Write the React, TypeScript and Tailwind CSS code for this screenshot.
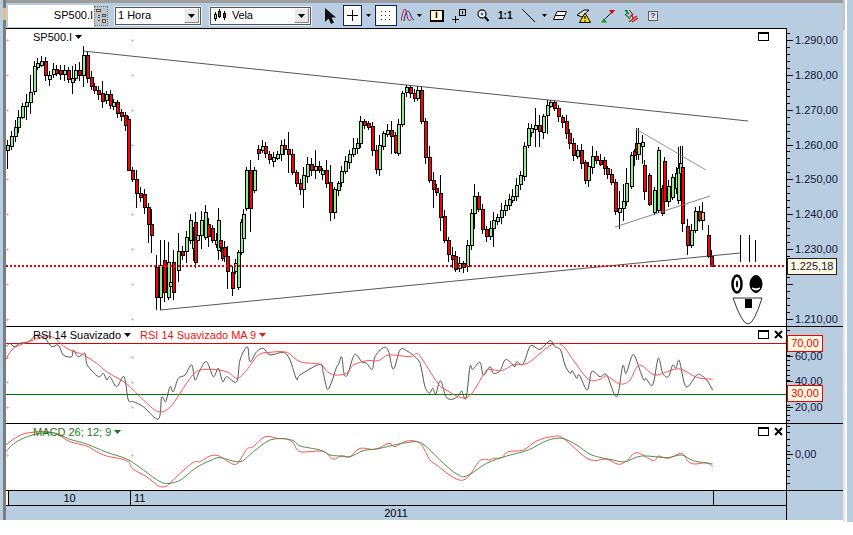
import React from "react";

type Pt = [number, number];

// main chart price trace in page coordinates
const priceTrace: Pt[] = [
  [7, 150], [12, 135], [20, 115], [25, 105], [30, 90], [35, 62], [40, 55], [45, 72], [55, 70], [65, 75], [70, 78],
  [80, 68], [83, 60], [88, 78], [92, 85], [100, 95], [105, 97], [112, 105], [120, 115], [125, 120], [128.5, 170],
  [131, 180], [140, 195], [148, 225], [155, 260], [158, 298], [165, 295], [172, 265], [180, 255], [190, 240],
  [200, 220], [205, 215], [215, 245], [225, 265], [232, 280], [238, 250], [245, 200], [250, 160], [258, 150],
  [268, 155], [285, 145], [292, 170], [298, 195], [305, 165], [315, 172], [325, 175], [330, 215], [335, 185],
  [345, 165], [352, 150], [360, 125], [370, 130], [375, 165], [382, 130], [390, 135], [395, 150], [402, 90],
  [410, 95], [418, 95], [422, 130], [428, 180], [435, 190], [442, 230], [450, 265], [458, 260], [465, 265],
  [470, 205], [478, 205], [485, 245], [495, 220], [502, 210], [512, 195], [520, 170], [527, 135], [532, 125],
  [540, 130], [547, 105], [556, 110], [565, 125], [570, 150], [578, 155], [585, 185], [590, 160], [600, 165],
  [610, 175], [617, 220], [625, 190], [632, 150], [637, 140], [642, 145], [648, 195], [655, 205], [660, 150],
  [665, 200], [672, 180], [680, 165], [683.5, 225], [688, 245], [695, 215], [702, 215], [708, 240], [712, 265],
];

const tallWicks: Record<number, [number, number]> = {
  39: [30, 80],
  637: [128, 160],
  703: [202, 230],
};

type Bar = { x: number; top: number; h: number; wt: number; wb: number; up: boolean };

const bar = (x: number, top: number, h: number, up: boolean, wt = top - 3, wb = top + h + 3): Bar => ({ x, top, h, wt, wb, up });

// candles placed by hand: the long bars of the reference
const fixedBars: Bar[] = [
  bar(128, 119, 51, false, 116, 170),
  bar(156, 267, 30, false, 255, 310),
  bar(160, 265, 32, true, 240, 310),
  bar(164, 260, 32, false, 240, 302),
  bar(168, 262, 35, true, 242, 300),
  bar(173, 262, 30, false, 250, 300),
  bar(190, 220, 20, true, 214, 244),
  bar(195, 222, 40, false, 212, 268),
  bar(205, 212, 25, true, 205, 240),
  bar(212, 228, 12, false),
  bar(218, 220, 30, true, 208, 260),
  bar(222, 248, 10, false),
  bar(232, 272, 16, false, 266, 296),
  bar(238, 252, 35, true, 250, 290),
  bar(241, 222, 30, true),
  bar(246, 170, 38, true),
  bar(250, 170, 38, false, 160, 232),
  bar(254, 170, 20, true),
  bar(631, 155, 31, true),
  bar(636, 143, 9, false, 128, 160),
  bar(644, 165, 26, false, 160, 200),
  bar(654, 190, 22, true),
  bar(658, 150, 60, true),
  bar(662, 188, 25, false),
  bar(672, 177, 20, true),
  bar(678, 168, 32, true, 147, 204),
  bar(682, 167, 56, false, 146, 232),
  bar(708, 235, 21, false, 225, 258),
  bar(711, 256, 10, false, 250, 266),
];

const upperLine = (x: number) => 51 + ((x - 83) * 70) / 665;
const lowerLine = (x: number) => 310 - ((x - 160) * 57) / 580;

function priceAt(x: number) {
  for (let i = 1; i < priceTrace.length; i++) {
    const [x0, y0] = priceTrace[i - 1];
    const [x1, y1] = priceTrace[i];
    if (x <= x1) return y0 + ((y1 - y0) * (x - x0)) / (x1 - x0);
  }
  return priceTrace[priceTrace.length - 1][1];
}

// choppy stretches of the chart get larger candles
function chop(x: number) {
  if (x > 150 && x < 240) return 2;
  if (x > 245 && x < 262) return 1.5;
  if (x > 355 && x < 400) return 1.5;
  if (x > 440 && x < 500) return 1.7;
  if (x > 610 && x < 680) return 1.7;
  return 1;
}

function makeCandles() {
  let seed = 41;
  const rnd = () => {
    seed = (seed * 1103515245 + 12345) % 2147483648;
    return seed / 2147483648;
  };
  const out: Bar[] = [];
  let prev = priceAt(7);
  for (let cx = 7; cx <= 706; cx += 3.8) {
    const k = chop(cx);
    const close = priceAt(cx) + (rnd() - 0.5) * 11 * k;
    const up = close < prev;
    const top = Math.round(Math.min(prev, close));
    const h = Math.max(4, Math.round(Math.abs(close - prev)));
    const big = rnd() > 0.72;
    const x = Math.round(cx);
    const fix = Object.keys(tallWicks).map(Number).find((n) => Math.abs(n - x) < 2);
    const skip = fixedBars.some((b) => Math.abs(b.x - x) < 2);
    if (!skip) {
      let wt = top - 2 - rnd() * (big ? 16 : 5);
      let wb = top + h + 2 + rnd() * (big ? 18 : 5);
      // highs and lows stop at the drawn trend lines
      if (x > 83) wt = Math.max(wt, upperLine(x));
      if (x > 160) wb = Math.min(wb, lowerLine(x));
      out.push({
        x,
        top,
        h,
        wt: fix ? tallWicks[fix][0] : wt,
        wb: fix ? tallWicks[fix][1] : wb,
        up,
      });
    }
    prev = close;
  }
  return [...out, ...fixedBars].sort((a, b) => a.x - b.x);
}

const candles = makeCandles();

const fromLeft = (base: number, pts: Pt[]): Pt[] => pts.map(([x, y]) => [x / 3, base + y / 3]);
const fromMid = (base: number, pts: Pt[]): Pt[] => pts.map(([x, y]) => [320 + x / 3, base + y / 3]);

// catmull-rom through the traced points, the lines of the reference are smoothed
function smooth(pts: Pt[]) {
  let d = `M${pts[0][0].toFixed(1)} ${pts[0][1].toFixed(1)}`;
  for (let i = 0; i < pts.length - 1; i++) {
    const p0 = pts[Math.max(i - 1, 0)];
    const p1 = pts[i];
    const p2 = pts[i + 1];
    const p3 = pts[Math.min(i + 2, pts.length - 1)];
    const c1x = p1[0] + (p2[0] - p0[0]) / 6;
    const c1y = p1[1] + (p2[1] - p0[1]) / 6;
    const c2x = p2[0] - (p3[0] - p1[0]) / 6;
    const c2y = p2[1] - (p3[1] - p1[1]) / 6;
    d += `C${c1x.toFixed(1)} ${c1y.toFixed(1)} ${c2x.toFixed(1)} ${c2y.toFixed(1)} ${p2[0].toFixed(1)} ${p2[1].toFixed(1)}`;
  }
  return d;
}

const rsiBlack = [
  ...fromLeft(320, [[18, 80], [30, 70], [42, 80], [60, 70], [85, 65], [110, 45], [135, 55], [155, 80], [175, 75], [190, 105], [215, 110], [220, 90], [235, 110], [255, 100], [262, 135], [295, 170], [310, 160], [320, 180], [330, 170], [350, 200], [372, 170], [385, 240], [400, 245], [430, 260], [475, 297], [485, 232], [497, 245], [510, 200], [520, 215], [535, 175], [555, 165], [575, 135], [585, 180], [600, 150], [620, 125], [640, 170], [655, 145], [668, 185], [680, 170], [710, 185], [720, 120], [742, 80], [750, 125], [770, 95], [790, 85], [810, 105], [850, 97], [870, 120], [890, 178], [900, 165]]),
  ...fromMid(330, [[0, 103], [10, 130], [22, 178], [35, 155], [50, 110], [55, 105], [65, 80], [72, 130], [82, 135], [100, 80], [110, 75], [125, 95], [140, 100], [157, 118], [165, 80], [190, 53], [205, 62], [220, 118], [240, 60], [260, 62], [295, 90], [305, 120], [315, 170], [328, 190], [338, 175], [347, 192], [358, 155], [365, 158], [378, 200], [395, 208], [415, 198], [425, 183], [438, 205], [450, 110], [458, 118], [480, 97], [490, 135], [510, 110], [520, 130], [540, 122], [555, 90], [570, 95], [585, 110], [590, 95], [605, 105], [615, 90], [632, 47], [660, 58], [690, 32], [705, 50], [722, 60], [735, 105], [750, 130], [757, 122], [770, 145], [778, 135], [802, 180], [815, 125], [840, 140], [860, 135], [890, 200], [908, 108], [918, 130], [935, 80], [945, 80], [970, 148], [978, 145], [998, 165], [1015, 85], [1028, 130], [1045, 140], [1058, 105], [1068, 115], [1078, 92], [1098, 170], [1130, 135], [1145, 137], [1160, 150], [1178, 180]]),
];

const rsiRed = [
  ...fromLeft(320, [[18, 118], [35, 90], [60, 75], [100, 60], [135, 48], [165, 55], [200, 85], [250, 105], [290, 130], [320, 155], [375, 188], [400, 210], [430, 240], [475, 275], [510, 262], [540, 220], [585, 158], [630, 148], [680, 155], [712, 175], [740, 150], [775, 105], [810, 97], [860, 97], [900, 125]]),
  ...fromMid(330, [[0, 103], [22, 125], [45, 135], [80, 130], [100, 105], [140, 92], [175, 92], [207, 75], [270, 80], [290, 70], [305, 85], [350, 155], [375, 178], [440, 203], [490, 135], [505, 118], [545, 122], [580, 105], [625, 98], [690, 47], [725, 45], [760, 90], [805, 148], [840, 148], [860, 138], [900, 162], [930, 150], [958, 105], [1005, 135], [1055, 120], [1085, 118], [1130, 142], [1178, 148]]),
];

const macdRed = [
  ...fromLeft(420, [[18, 75], [40, 58], [70, 42], [100, 37], [140, 35], [175, 45], [210, 65], [260, 78], [290, 95], [320, 108], [380, 122], [400, 148], [440, 170], [475, 197], [500, 198], [535, 165], [580, 127], [600, 125], [630, 108], [655, 107], [680, 122], [710, 132], [740, 88], [760, 80], [795, 50], [830, 55], [860, 57], [880, 70], [900, 95]]),
  ...fromMid(330, [[0, 363], [20, 370], [40, 388], [65, 377], [90, 380], [120, 355], [165, 358], [207, 340], [225, 350], [260, 333], [300, 340], [330, 390], [350, 405], [405, 445], [440, 445], [480, 392], [510, 390], [520, 385], [545, 383], [565, 365], [610, 360], [650, 333], [695, 320], [730, 325], [805, 387], [860, 388], [895, 403], [920, 393], [950, 368], [1000, 392], [1015, 378], [1045, 385], [1085, 370], [1105, 395], [1125, 402], [1160, 398], [1178, 410]]),
];

const macdGreen = [
  ...fromLeft(420, [[18, 95], [40, 72], [70, 55], [110, 42], [160, 38], [210, 58], [260, 72], [320, 97], [380, 117], [430, 150], [480, 185], [510, 190], [545, 178], [585, 145], [630, 122], [660, 113], [720, 125], [760, 95], [810, 60], [860, 57], [885, 65], [900, 78]]),
  ...fromMid(330, [[0, 360], [30, 375], [60, 378], [90, 380], [130, 362], [170, 357], [210, 348], [260, 338], [305, 340], [365, 395], [410, 432], [440, 438], [500, 400], [560, 378], [625, 360], [680, 332], [725, 325], [770, 345], [815, 375], [880, 390], [915, 395], [965, 378], [1040, 383], [1085, 375], [1120, 392], [1178, 402]]),
];

const Caret = ({ color = "#000" }: { color?: string }) => (
  <svg width="7" height="4" viewBox="0 0 7 4" className="ml-[3px] inline-block">
    <path d="M0 0h7L3.5 4z" fill={color} />
  </svg>
);

const GridMarks = ({ ys }: { ys: number[] }) => (
  <g stroke="#c8c8c8" strokeWidth="1" shapeRendering="crispEdges">
    {ys.map((y) => (
      <g key={y}>
        {[7, 132].map((x) => (
          <path key={x} d={`M${x - 1} ${y}h3M${x} ${y - 1}v3`} />
        ))}
      </g>
    ))}
  </g>
);

const PaneButtons = ({ close }: { close?: boolean }) => (
  <div className="absolute right-[3px] top-[3px] flex items-center gap-[5px]">
    <svg width="11" height="9" viewBox="0 0 11 9" shapeRendering="crispEdges">
      <path d="M.5 1.5h10v7H.5z" fill="none" stroke="#000" />
      <path d="M0 .5h11" stroke="#000" />
    </svg>
    {close ? (
      <svg width="9" height="9" viewBox="0 0 9 9">
        <path d="M1 1l7 7M8 1L1 8" stroke="#000" strokeWidth="2" />
      </svg>
    ) : (
      <span className="w-[9px]" />
    )}
  </div>
);

const Ticks = ({ y0, height, major, minor }: { y0: number; height: number; major: number[]; minor: number[] }) => (
  <svg width="10" height={height} viewBox={`0 ${y0} 10 ${height}`} shapeRendering="crispEdges" className="absolute left-0 top-0">
    {minor.map((y) => (
      <path key={y} d={`M0 ${y}h3`} stroke="#000" />
    ))}
    {major.map((y) => (
      <path key={y} d={`M0 ${y}h6`} stroke="#000" />
    ))}
  </svg>
);

const range = (from: number, to: number, step: number) => {
  const out: number[] = [];
  for (let v = from; v <= to; v += step) out.push(Math.round(v));
  return out;
};

const mainYs = range(40, 320, 34.86);

const MainChart = () => (
  <svg width="780" height="297" viewBox="6 29 780 297" className="block">
    <GridMarks ys={mainYs} />
    <g shapeRendering="crispEdges">
      {candles.map((c, i) => (
        <g key={i}>
          <path d={`M${c.x + 0.5} ${Math.round(c.wt)}V${Math.round(c.wb)}`} stroke="#000" strokeWidth="1" />
          <rect x={c.x - 1} y={c.top + 0.5} width="3" height={c.h} fill={c.up ? "#90ee90" : "#ff0000"} stroke="#000" strokeWidth="1" />
        </g>
      ))}
    </g>
    <g stroke="#444" strokeWidth="0.9" fill="none">
      <path d="M83 51L748 121" />
      <path d="M160 310L740 253" />
      <path d="M636 129L706 170" stroke="#888" />
      <path d="M615 227L710 196" stroke="#777" />
    </g>
    <path d="M6 266H786" stroke="#ee0000" strokeWidth="2" strokeDasharray="2 2" />
    {/* hand drawn face */}
    <g stroke="#000" fill="none">
      <path d="M740.5 235V262M749.5 235V262M755.5 240V262" strokeWidth="1" />
      <ellipse cx="737" cy="284" rx="4.5" ry="8.5" strokeWidth="2.5" />
      <ellipse cx="737" cy="284" rx="1" ry="3.5" fill="#000" strokeWidth="0" />
      <ellipse cx="756" cy="284" rx="6" ry="8.5" fill="#000" />
      <path d="M752 288q4 4 8 0q-4 2-8 0z" fill="#fff" stroke="#fff" strokeWidth="1" />
      <path d="M733 298H762Q754 324 748 324Q742 324 733 298Z" strokeWidth="0.8" />
      <rect x="745" y="299" width="7" height="9" fill="#000" stroke="none" />
    </g>
  </svg>
);

const RsiChart = () => (
  <svg width="780" height="96" viewBox="6 327 780 96" className="block">
    <GridMarks ys={[357, 382, 407]} />
    <path d="M6 343.5H786" stroke="#dd0000" shapeRendering="crispEdges" />
    <path d="M6 394.5H786" stroke="#008000" shapeRendering="crispEdges" />
    <path d={smooth(rsiBlack)} fill="none" stroke="#555" strokeWidth="1" />
    <path d={smooth(rsiRed)} fill="none" stroke="#ff5050" strokeWidth="1" />
  </svg>
);

const MacdChart = () => (
  <svg width="780" height="66" viewBox="6 424 780 66" className="block">
    <GridMarks ys={[455]} />
    <path d={smooth(macdRed)} fill="none" stroke="#ff5050" strokeWidth="1" />
    <path d={smooth(macdGreen)} fill="none" stroke="#4f8f4f" strokeWidth="1" />
  </svg>
);

const DropButton = () => (
  <div className="ml-auto mr-px flex h-[15px] w-[15px] items-center justify-center border border-[#888] border-l-white border-t-white bg-[#e8e8e8]">
    <svg width="7" height="4" viewBox="0 0 7 4">
      <path d="M0 0h7L3.5 4z" fill="#000" />
    </svg>
  </div>
);

const SmallArrow = ({ className }: { className: string }) => (
  <svg width="5" height="3" viewBox="0 0 5 3" className={className}>
    <path d="M0 0h5L2.5 3z" fill="#000" />
  </svg>
);

const CandleIcon = () => (
  <svg width="12" height="13" viewBox="0 0 12 13" shapeRendering="crispEdges">
    <path d="M1.5 3v9M5.5 0v9M10 2v9" stroke="#000" />
    <rect x="0.5" y="5.5" width="2" height="4" fill="#90ee90" stroke="#000" />
    <rect x="4.5" y="2.5" width="2" height="5" fill="#00a000" stroke="#000" />
    <rect x="9" y="4.5" width="2" height="4" fill="#f00" stroke="#000" />
  </svg>
);

const Toolbar = () => (
  <div className="flex h-[25px] shrink-0 items-center bg-[#b8cde0] text-[11px] text-black">
    <div className="ml-[2px] flex h-[22px] w-[86px] items-center justify-end bg-white pr-[1px]">SP500.I</div>
    <div className="flex h-[20px] w-[14px] items-center justify-center border border-dotted border-[#777] bg-[#c0c4c8]">
      <svg width="10" height="14" viewBox="0 0 10 14" shapeRendering="crispEdges" fill="none" stroke="#555">
        <path d="M.5 .5h4v2h-4zM6.5 5.5h3v2h-3zM6.5 10.5h3v3h-3zM1.5 6h2M1.5 8.5h2M1.5 11h2" />
      </svg>
    </div>
    <div className="ml-[6px] flex h-[20px] w-[88px] items-center border-2 border-[#e8eef4] bg-white pl-[2px] outline-1 -outline-offset-2 outline-[#555]">
      1 Hora
      <DropButton />
    </div>
    <div className="ml-[7px] flex h-[20px] w-[103px] items-center border-2 border-[#e8eef4] bg-white pl-[3px] outline-1 -outline-offset-2 outline-[#555]">
      <CandleIcon />
      <span className="ml-[6px] tracking-[-0.2px]">Vela</span>
      <DropButton />
    </div>
    {/* cursor */}
    <svg width="12" height="16" viewBox="0 0 12 16" className="ml-[12px]">
      <path d="M1 0v14l3.5-3.5L7 16l3-1.5L7.5 9.5H12z" fill="#111" />
    </svg>
    <div className="ml-[7px] flex h-[21px] w-[19px] items-center justify-center border-[1.5px] border-[#0a246a] bg-white">
      <svg width="11" height="11" viewBox="0 0 11 11" shapeRendering="crispEdges">
        <path d="M5.5 0v11M0 5.5h11" stroke="#000" />
      </svg>
    </div>
    <SmallArrow className="ml-[4px]" />
    <div className="ml-[4px] flex h-[21px] w-[22px] items-center justify-center border-[1.5px] border-[#0a246a] bg-white">
      <svg width="12" height="12" viewBox="0 0 12 12" shapeRendering="crispEdges">
        {[1, 5, 9].map((y) =>
          [1, 5, 9].map((x) => <rect key={`${x}-${y}`} x={x} y={y} width="1" height="1" fill="#333" />),
        )}
      </svg>
    </div>
    <svg width="13" height="13" viewBox="0 0 13 13" className="ml-[4px]" fill="none">
      <path d="M0 12C2 2 3 0 4 0s2 8 3 10 3 2 3 0" stroke="#c01818" />
      <path d="M3 12C4 6 5 2 7 2s3 8 6 9" stroke="#1c2a90" />
    </svg>
    <SmallArrow className="ml-[3px]" />
    <div className="ml-[8px] flex h-[12px] w-[14px] items-center justify-center border border-b-2 border-r-2 border-black bg-[#fff8d8] text-[10px] font-bold leading-none">
      i
    </div>
    <svg width="14" height="14" viewBox="0 0 14 14" className="ml-[8px]" shapeRendering="crispEdges" fill="none" stroke="#000">
      <path d="M0 10.5h7M3.5 7v7" />
      <path d="M7.5 .5h6v6h-6z" />
      <path d="M10.5 2v3" strokeWidth="1" />
    </svg>
    <svg width="12" height="13" viewBox="0 0 12 13" className="ml-[11px]" fill="none">
      <circle cx="5" cy="5" r="4" stroke="#222" strokeWidth="1.4" fill="#fff" />
      <path d="M8 8l3.5 4" stroke="#000" strokeWidth="2.2" />
      <path d="M3.5 5h3M5 3.5v3" stroke="#1030b0" />
    </svg>
    <span className="ml-[9px] w-[14px] text-[10px] font-bold leading-none">1:1</span>
    <svg width="13" height="13" viewBox="0 0 13 13" className="ml-[10px]" fill="none">
      <path d="M0 0l13 13" stroke="#000" />
    </svg>
    <SmallArrow className="ml-[7px]" />
    <svg width="14" height="9" viewBox="0 0 14 9" className="ml-[6px]" fill="#fff" stroke="#000">
      <path d="M4 .5h9.5L10 8.5H.5z" />
      <path d="M2.5 4.5H12" />
    </svg>
    <svg width="15" height="14" viewBox="0 0 15 14" className="ml-[9px]" stroke="#000">
      <path d="M1 6L8 1h5L6 8z" fill="#ddd" />
      <path d="M9 4L14.5 13.5H3.5z" fill="#ffe000" />
      <path d="M9 7v3M9 11v1.5" strokeWidth="1.2" />
    </svg>
    <svg width="14" height="14" viewBox="0 0 14 14" className="ml-[10px]" fill="none">
      <path d="M3 11L11 3" stroke="#000" />
      <path d="M8 1h6l-3 4z" fill="#e00000" />
      <path d="M0 13.5h6L3 9z" fill="#10a010" />
    </svg>
    <svg width="14" height="14" viewBox="0 0 14 14" className="ml-[9px]" fill="none">
      <path d="M1 1l4 4M3 1v4M1 5l5 5" stroke="#108030" strokeWidth="1.3" />
      <path d="M6 8l3-3M8 4l1 6M5 13l8-6M8 13l6-4" stroke="#d01818" strokeWidth="1.3" />
      <path d="M5 1l3 3" stroke="#333" />
    </svg>
    <div className="ml-[10px] flex h-[10px] w-[10px] items-center justify-center border border-[#666] bg-[#dde] text-[8px] font-bold leading-none text-[#333]">
      ?
    </div>
  </div>
);

const Badge = ({ children }: { children: React.ReactNode }) => (
  <div className="flex h-[17px] w-[36px] items-center justify-center border-[1.5px] border-[#ee0000] bg-[#fff8e0] text-[11px] leading-none text-[#ee0000]">
    {children}
  </div>
);

const AxisLabel = ({ children }: { children: React.ReactNode }) => (
  <div className="h-[14px] pl-[8px] text-[11px] leading-[14px] text-[#14143c]">{children}</div>
);

export default function App() {
  return (
    <div className="h-[535px] w-[853px] overflow-hidden bg-white font-['Liberation_Sans',sans-serif]">
      <div className="flex h-[523px]">
        {/* left window edge */}
        <div className="flex h-[520px] w-[6px]">
          <div className="w-[3px] bg-[#b8cde0]" />
          <div className="flex w-[3px] flex-col bg-[#7d7d7d]">
            <div className="h-[8px]" />
            <div className="h-[12px] bg-[#e8c070]" />
          </div>
        </div>

        <div className="flex h-[520px] w-[837px] flex-col">
          <div className="h-[3px] shrink-0 bg-[#9c9c9c]" />
          <Toolbar />

          <div className="flex h-[299px] shrink-0 border-b border-black">
            <div className="relative h-[298px] w-[781px] border-r border-t border-black bg-white">
              <MainChart />
              <div className="absolute left-[27px] top-[1px] flex items-center text-[11px] leading-[14px] text-black">
                SP500.I
                <Caret />
              </div>
              <PaneButtons />
            </div>
            <div className="relative flex-1 bg-[#b8cde0]">
              <Ticks y0={28} height={298} major={mainYs} minor={range(33, 325, 6.97)} />
              <div className="flex flex-col gap-[20.86px] pt-[5px]">
                {["1.290,00", "1.280,00", "1.270,00", "1.260,00", "1.250,00", "1.240,00", "1.230,00"].map((t) => (
                  <AxisLabel key={t}>{t}</AxisLabel>
                ))}
                <div className="h-[14px]" />
                <AxisLabel>1.210,00</AxisLabel>
              </div>
              <div className="absolute left-0 top-[230px] flex h-[17px] w-[50px] items-center justify-center border border-[#222] bg-[#fff8e0] text-[11px] leading-none text-[#14143c]">
                1.225,18
              </div>
            </div>
          </div>

          <div className="flex h-[97px] shrink-0 border-b border-black">
            <div className="relative w-[781px] border-r border-black bg-white">
              <RsiChart />
              <div className="absolute left-[27px] top-[1px] flex items-center text-[11px] leading-[14px]">
                <span className="flex items-center text-black">
                  RSI 14 Suavizado
                  <Caret />
                </span>
                <span className="ml-[9px] flex items-center text-[#ee1111]">
                  RSI 14 Suavizado MA 9
                  <Caret color="#ee1111" />
                </span>
              </div>
              <PaneButtons close />
            </div>
            <div className="relative flex-1 bg-[#b8cde0]">
              <Ticks y0={327} height={96} major={[356, 381, 407]} minor={range(330, 422, 5)} />
              <div className="flex flex-col gap-[11.4px] pt-[22px]">
                <AxisLabel>60,00</AxisLabel>
                <AxisLabel>40,00</AxisLabel>
                <AxisLabel>20,00</AxisLabel>
              </div>
              <div className="absolute left-0 top-[8px]">
                <Badge>70,00</Badge>
              </div>
              <div className="absolute left-0 top-[58px]">
                <Badge>30,00</Badge>
              </div>
            </div>
          </div>

          <div className="flex h-[67px] shrink-0 border-b border-black">
            <div className="relative w-[781px] border-r border-black bg-white">
              <MacdChart />
              <div className="absolute left-[27px] top-[1px] flex items-center text-[11px] leading-[14px] text-[#1a7a1a]">
                MACD 26; 12; 9
                <Caret color="#117711" />
              </div>
              <PaneButtons close />
            </div>
            <div className="relative flex-1 bg-[#b8cde0]">
              <Ticks y0={424} height={66} major={[454]} minor={range(426, 489, 6.3)} />
              <div className="pt-[23px]">
                <AxisLabel>0,00</AxisLabel>
              </div>
            </div>
          </div>

          <div className="flex flex-1 bg-[#b8cde0] text-[11px] text-black">
            <div className="w-[781px] border-r border-black">
              <div className="flex h-[15px] border-b border-black leading-[14px]">
                <div className="w-[3px] border-r border-black bg-[#fff8e0]" />
                <div className="w-[122px] border-r border-black text-center">10</div>
                <div className="w-[583px] border-r border-black pl-[3px]">11</div>
              </div>
              <div className="text-center leading-[14px]">2011</div>
            </div>
          </div>
        </div>

        {/* right window edge */}
        <div className="flex h-[522px] w-[10px]">
          <div className="flex w-[2px] flex-col bg-[#e6e6e6]">
            <div className="h-[30px] bg-[#c4c4c4]" />
          </div>
          <div className="w-[2px] bg-white" />
          <div className="w-[6px] bg-[#b8cde0]" />
        </div>
      </div>
    </div>
  );
}
